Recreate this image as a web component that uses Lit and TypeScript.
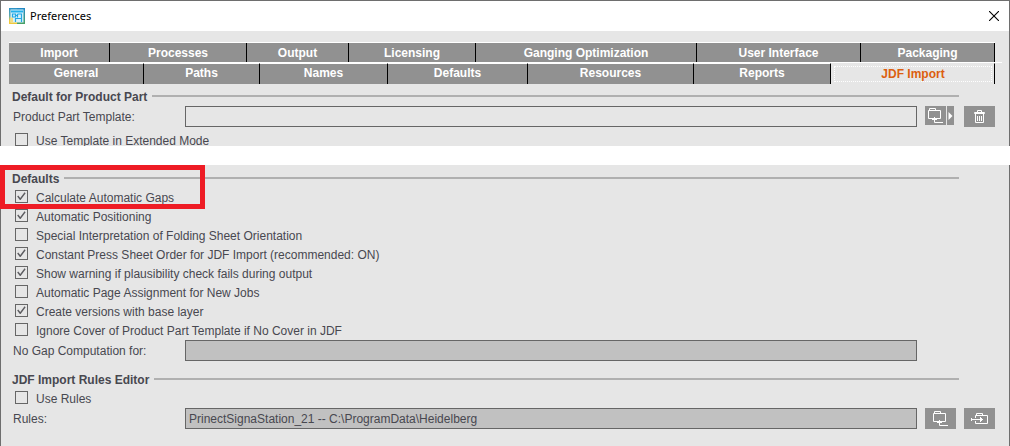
import { LitElement, html, css, svg } from "lit";
import { customElement, property } from "lit/decorators.js";

interface Tab {
  label: string;
  weight: number;
  active?: boolean;
}

const TAB_ROWS: Tab[][] = [
  [
    { label: "Import", weight: 101 },
    { label: "Processes", weight: 137 },
    { label: "Output", weight: 102 },
    { label: "Licensing", weight: 127 },
    { label: "Ganging Optimization", weight: 221 },
    { label: "User Interface", weight: 164 },
    { label: "Packaging", weight: 134 },
  ],
  [
    { label: "General", weight: 135 },
    { label: "Paths", weight: 116 },
    { label: "Names", weight: 128 },
    { label: "Defaults", weight: 140 },
    { label: "Resources", weight: 166 },
    { label: "Reports", weight: 137 },
    { label: "JDF Import", weight: 164, active: true },
  ],
];

const FIRST_DEFAULT = { label: "Calculate Automatic Gaps", checked: true };

const DEFAULTS = [
  { label: "Automatic Positioning", checked: true },
  { label: "Special Interpretation of Folding Sheet Orientation", checked: false },
  { label: "Constant Press Sheet Order for JDF Import (recommended: ON)", checked: true },
  { label: "Show warning if plausibility check fails during output", checked: true },
  { label: "Automatic Page Assignment for New Jobs", checked: false },
  { label: "Create versions with base layer", checked: true },
  { label: "Ignore Cover of Product Part Template if No Cover in JDF", checked: false },
];

const folderIcon = svg`
  <path d="M0.5 2.5H12.5V10.5H0.5ZM1.5 2V0.5H7.5V2" />
  <path d="M4 11.5H9M6.5 9V14.5H15" />`;

const trashIcon = svg`
  <path d="M3.5 2V0.5H7.5V2M0.5 2.5H10.5V3.5H0.5ZM1.5 4V12.5H9.5V4M3.5 6V11M5.5 6V11M7.5 6V11" />`;

const importIcon = svg`
  <path d="M4.5 5V2.5H16.5V10.5H4.5V8M5.5 2V0.5H11.5V2M0.5 5V8M0 6.5H12" />
  <path d="M9.5 4V9M10.5 5V8" />`;

@customElement("check-row")
export class CheckRow extends LitElement {
  @property() label = "";
  @property({ type: Boolean }) checked = false;

  static styles = css`
    :host {
      display: block;
    }
    .row {
      display: flex;
      align-items: center;
      gap: 8px;
      height: 19px;
      padding-left: 14px;
      width: max-content;
      white-space: nowrap;
    }
    .caption {
      padding-top: 2px;
    }
    .box {
      appearance: none;
      display: grid;
      place-items: center;
      width: 13px;
      height: 13px;
      margin: 0;
      border: 1px solid #666;
      border-radius: 0;
      background: transparent;
    }
    .box:checked::before {
      content: "";
      width: 9px;
      height: 9px;
      background: #5c5c60;
      clip-path: polygon(2% 50%, 14% 40%, 36% 66%, 84% 4%, 96% 14%, 40% 90%, 32% 90%);
    }
  `;

  render() {
    return html`<label class="row">
      <input class="box" type="checkbox" .checked=${this.checked} />
      <span class="caption">${this.label}</span>
    </label>`;
  }
}

@customElement("group-heading")
export class GroupHeading extends LitElement {
  static styles = css`
    :host {
      display: block;
    }
    .heading {
      display: flex;
      align-items: center;
      gap: 5px;
      height: 18px;
      margin: 0;
      padding: 0 50px 0 11px;
      font-size: 12px;
      font-weight: bold;
    }
    .caption {
      padding-top: 2px;
    }
    .heading::after {
      content: "";
      flex: 1;
      height: 2px;
      background: #b0b0b0;
    }
  `;

  render() {
    return html`<h2 class="heading"><span class="caption"><slot></slot></span></h2>`;
  }
}

@customElement("app-root")
export class AppRoot extends LitElement {
  static styles = css`
    :host {
      display: block;
      background: #fff;
      color: #484850;
      font: 12px/16px "Liberation Sans", Arial, sans-serif;
    }
    * {
      box-sizing: border-box;
    }
    .window {
      display: flex;
      flex-direction: column;
      gap: 19px;
      min-height: 100vh;
    }
    .panel {
      border: solid #6e6e6e;
      border-width: 0 1px;
      background: #e6e6e6;
    }
    .upper {
      height: 146px;
      border-top-width: 1px;
      overflow: hidden;
    }
    .lower {
      position: relative;
      flex: 1;
      padding-top: 4px;
    }
    .titlebar {
      display: flex;
      align-items: center;
      gap: 5px;
      height: 30px;
      padding: 0 8px;
      background: #fff;
      color: #000;
    }
    .title {
      flex: 1;
      margin: 0;
      font: 11px/16px "Noto Sans", "Open Sans", sans-serif;
    }
    .close {
      display: grid;
      place-items: center;
      width: 14px;
      height: 14px;
      padding: 0;
      border: 0;
      background: none;
    }
    .logo {
      display: block;
    }
    .tabs {
      padding: 11px 7px 0 8px;
      margin-bottom: 3px;
    }
    .tabrow {
      display: grid;
      height: 22px;
      padding-right: 7px;
      border-top: 1px solid #fff;
    }
    .tabrow.first {
      height: 20px;
      margin-right: 7px;
      padding-right: 0;
    }
    .tab {
      min-width: 0;
      padding: 0 2px;
      border: 0;
      border-right: 1px solid #000;
      border-radius: 0;
      background: #919191;
      color: #fff;
      font: bold 12px/18px "Liberation Sans", Arial, sans-serif;
      white-space: nowrap;
    }
    .tabrow:not(.first) .tab {
      padding-bottom: 2px;
      border-top: 1px solid #fff;
    }
    .tabrow:not(.first) .tab.active {
      padding: 2px 2px 2px 3px;
      border-top-color: #e6e6e6;
      background: #e6e6e6;
      color: #dc5f0f;
    }
    .ring {
      display: block;
      border: 1px dotted #fff;
      line-height: 14px;
    }
    .field {
      display: grid;
      grid-template-columns: 164px minmax(0, 1fr) 31px 31px;
      column-gap: 8px;
      align-items: start;
      margin-top: 1px;
      padding: 0 14px 0 12px;
    }
    .label {
      height: 21px;
      padding-top: 1px;
      line-height: 21px;
    }
    .text {
      width: 100%;
      height: 21px;
      padding: 0 3px;
      border: 1px solid #666;
      border-radius: 0;
      outline: 0;
      background: transparent;
      color: inherit;
      font: inherit;
    }
    .text:read-only {
      background: #c1c1c1;
    }
    .tool {
      display: grid;
      place-items: center;
      width: 31px;
      height: 21px;
      padding: 0;
      border: 0;
      background: #919191;
      color: #fff;
    }
    .split {
      display: flex;
      gap: 1px;
    }
    .split .tool {
      width: 21px;
      height: 19px;
    }
    .split .arrow {
      width: 7px;
    }
    .glyph {
      display: block;
      fill: none;
      stroke: currentColor;
    }
    .solid {
      fill: currentColor;
      stroke: none;
    }
    .extended {
      margin-top: 3px;
    }
    .editor {
      margin-top: 9px;
    }
    .marker {
      position: absolute;
      top: 0;
      left: -1px;
      width: 205px;
      height: 44px;
      border: 5px solid #ee1c25;
      pointer-events: none;
    }
  `;

  private renderTabs(row: Tab[], index: number) {
    const columns = row.map((tab) => `minmax(0, ${tab.weight}fr)`).join(" ");
    return html`<div
      class="tabrow ${index === 0 ? "first" : ""}"
      role="tablist"
      style="grid-template-columns:${columns}"
    >
      ${row.map(
        (tab) => html`<button
          class="tab ${tab.active ? "active" : ""}"
          role="tab"
          aria-selected=${tab.active ? "true" : "false"}
        >${tab.active ? html`<span class="ring">${tab.label}</span>` : tab.label}</button>`
      )}
    </div>`;
  }

  private glyph(width: number, height: number, shape: unknown) {
    return html`<svg class="glyph" width=${width} height=${height} viewBox="0 0 ${width} ${height}" aria-hidden="true">${shape}</svg>`;
  }

  render() {
    return html`<main class="window">
      <section class="panel upper">
        <header class="titlebar">
          <svg class="logo" width="16" height="16" viewBox="0 0 16 16" aria-hidden="true">
            <defs>
              <linearGradient id="left" x1="0" y1="0" x2="0" y2="1">
                <stop offset="0" stop-color="#2b93c9" />
                <stop offset="0.5" stop-color="#5fa9a8" />
                <stop offset="0.8" stop-color="#f1c93c" />
              </linearGradient>
              <linearGradient id="right" x1="0" y1="0" x2="0" y2="1">
                <stop offset="0" stop-color="#2088c8" />
                <stop offset="1" stop-color="#4aa263" />
              </linearGradient>
            </defs>
            <rect width="8" height="16" fill="url(#left)" />
            <rect x="8" width="8" height="16" fill="url(#right)" />
            <rect x="1.5" y="1.5" width="13" height="13" fill="#d9f1fb" />
            <path d="M1.5 9.5H4V14.5H1.500Z" fill="#f3dc83" />
            <path d="M2 3.500H14" fill="none" stroke="#22b0ea" stroke-width="2" />
            <path d="M3.500 6H6.500V9H3.500ZM8.500 6H12.500V14M8.500 6V9.500M6.500 7.500H8.500M6 10.500H12.500M6.500 10.500V14" fill="none" stroke="#22a8e4" stroke-width="1.2" />
          </svg>
          <h1 class="title">Preferences</h1>
          <button class="close" aria-label="Close">
            <svg width="10" height="10" viewBox="0 0 10 10" aria-hidden="true">
              <path d="M0 0L10 10M10 0L0 10" stroke="#000" stroke-width="1.1" />
            </svg>
          </button>
        </header>
        <nav class="tabs">${TAB_ROWS.map((row, i) => this.renderTabs(row, i))}</nav>
        <group-heading>Default for Product Part</group-heading>
        <div class="field">
          <label class="label" for="template">Product Part Template:</label>
          <input class="text" id="template" type="text" />
          <div class="split">
            <button class="tool" aria-label="Browse template">${this.glyph(15, 15, folderIcon)}</button>
            <button class="tool arrow" aria-label="More">
              <svg class="glyph solid" width="5" height="8" viewBox="0 0 5 8" aria-hidden="true"><path d="M0.5 0L4.5 4L0.5 8Z" /></svg>
            </button>
          </div>
          <button class="tool" aria-label="Delete template">${this.glyph(11, 13, trashIcon)}</button>
        </div>
        <check-row class="extended" label="Use Template in Extended Mode"></check-row>
      </section>
      <section class="panel lower">
        <group-heading>Defaults</group-heading>
        <check-row label=${FIRST_DEFAULT.label} ?checked=${FIRST_DEFAULT.checked}></check-row>
        <div class="marker"></div>
        ${DEFAULTS.map((item) => html`<check-row label=${item.label} ?checked=${item.checked}></check-row>`)}
        <div class="field">
          <label class="label" for="nogap">No Gap Computation for:</label>
          <input class="text" id="nogap" type="text" readonly />
        </div>
        <group-heading class="editor">JDF Import Rules Editor</group-heading>
        <check-row label="Use Rules"></check-row>
        <div class="field">
          <label class="label" for="rules">Rules:</label>
          <input class="text" id="rules" type="text" readonly value="PrinectSignaStation_21 -- C:\\ProgramData\\Heidelberg" />
          <button class="tool" aria-label="Browse rules">${this.glyph(15, 15, folderIcon)}</button>
          <button class="tool" aria-label="Import rules">${this.glyph(17, 11, importIcon)}</button>
        </div>
      </section>
    </main>`;
  }
}
